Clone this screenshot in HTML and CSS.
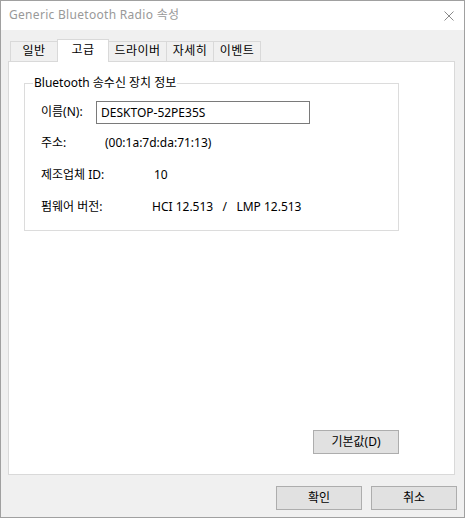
FILE: index.html
```html
<!DOCTYPE html>
<html lang="ko">
<head>
<meta charset="utf-8">
<title>Generic Bluetooth Radio 속성</title>
<link rel="stylesheet" href="styles.css">
</head>
<body>
<div class="window">
  <div class="titlebar">
    <span class="title">Generic Bluetooth Radio 속성</span>
    <span class="close">
      <svg width="10" height="10" viewBox="0 0 10 10"><path d="M0.5 0.5 L9.5 9.5 M9.5 0.5 L0.5 9.5" stroke="#8a8a8a" stroke-width="1" fill="none"/></svg>
    </span>
  </div>
  <div class="main">
    <div class="tabs">
      <div class="tab t1">일반</div>
      <div class="tab t2 selected">고급</div>
      <div class="tab t3">드라이버</div>
      <div class="tab t4">자세히</div>
      <div class="tab t5">이벤트</div>
    </div>
    <div class="panel">
      <div class="group">
        <div class="group-title">Bluetooth 송수신 장치 정보</div>
        <div class="row row-name">
          <span class="label">이름(N):</span>
          <div class="textbox">DESKTOP-52PE35S</div>
        </div>
        <div class="row">
          <span class="label">주소:</span>
          <span class="value v-addr">(00:1a:7d:da:71:13)</span>
        </div>
        <div class="row">
          <span class="label">제조업체 ID:</span>
          <span class="value v-id">10</span>
        </div>
        <div class="row">
          <span class="label">펌웨어 버전:</span>
          <span class="value v-fw">HCI 12.513 &nbsp;&nbsp;/ &nbsp;&nbsp;LMP 12.513</span>
        </div>
      </div>
      <button class="btn btn-default">기본값(D)</button>
    </div>
    <div class="footer">
      <button class="btn">확인</button>
      <button class="btn">취소</button>
    </div>
  </div>
</div>
</body>
</html>
```

FILE: styles.css
```css
* { box-sizing: border-box; }
html, body { margin: 0; padding: 0; }
body {
  font-family: "Segoe UI", "Noto Sans", "Noto Sans CJK KR", sans-serif;
  font-size: 12px;
  color: #000;
  background: #f0f0f0;
}
.window {
  width: 465px;
  height: 518px;
  border: 1px solid #a0a0a0;
  background: #f0f0f0;
  display: flex;
  flex-direction: column;
}
.titlebar {
  height: 29px;
  background: #fff;
  display: flex;
  align-items: center;
  justify-content: space-between;
  padding-left: 8px;
  padding-right: 10px;
}
.title {
  color: #999;
  font-size: 12px;
  line-height: 16px;
  margin-top: -1px;
  letter-spacing: 0.3px;
}
.close {
  display: flex;
  width: 10px;
  height: 10px;
  margin-top: 1px;
}
.main {
  flex: 1;
  display: flex;
  flex-direction: column;
  padding: 9px 9px 0 7px;
}
.tabs {
  display: flex;
  align-items: flex-end;
  height: 22px;
  margin-left: 2px;
  position: relative;
  z-index: 1;
}
.tab {
  height: 20px;
  border: 1px solid #d9d9d9;
  border-bottom: none;
  background: #f0f0f0;
  text-align: center;
  line-height: 18px;
  margin-left: -1px;
  font-size: 12px;
  letter-spacing: 0.5px;
}
.tab.t1 { margin-left: 0; width: 48px; }
.tab.t2 { width: 52px; }
.tab.t3 { width: 59px; }
.tab.t4 { width: 48px; }
.tab.t5 { width: 48px; }
.tab.selected {
  height: 23px;
  background: #fff;
  margin-bottom: -1px;
  line-height: 20px;
  position: relative;
  z-index: 2;
}
.panel {
  width: 447px;
  height: 414px;
  border: 1px solid #d9d9d9;
  background: #fff;
  display: flex;
  flex-direction: column;
  padding: 21px 55px 20px 15px;
}
.group {
  width: 375px;
  height: 148px;
  border: 1px solid #dcdcdc;
  padding: 0 0 0 16px;
}
.group-title {
  display: inline-block;
  background: #fff;
  margin: -9px 0 0 -8px;
  padding: 0 1px;
  line-height: 16px;
  height: 16px;
  vertical-align: top;
}
.row {
  display: flex;
  align-items: center;
  height: 32px;
}
.row-name {
  height: 24px;
  margin-top: -1px;
  margin-bottom: 3px;
}
.label {
  line-height: 16px;
}
.textbox {
  width: 214px;
  height: 23px;
  border: 1px solid #7a7a7a;
  padding-left: 4px;
  line-height: 21px;
}
.row-name .label { width: 55px; }
.row .value { line-height: 16px; }
.v-addr { margin-left: 26px; }
.v-id { margin-left: 38px; }
.v-fw { margin-left: 36px; }
.row:nth-child(3) .label { width: 38px; }
.row:nth-child(4) .label { width: 75px; }
.row:nth-child(5) .label { width: 75px; }
.btn {
  width: 86px;
  height: 24px;
  border: 1px solid #adadad;
  background: #e1e1e1;
  font-family: inherit;
  font-size: 12px;
  color: #000;
  padding: 0;
  line-height: 20px;
}
.btn-default {
  margin-top: auto;
  align-self: flex-end;
}
.footer {
  display: flex;
  justify-content: flex-end;
  gap: 9px;
  margin-top: 11px;
  margin-right: -2px;
}
```
